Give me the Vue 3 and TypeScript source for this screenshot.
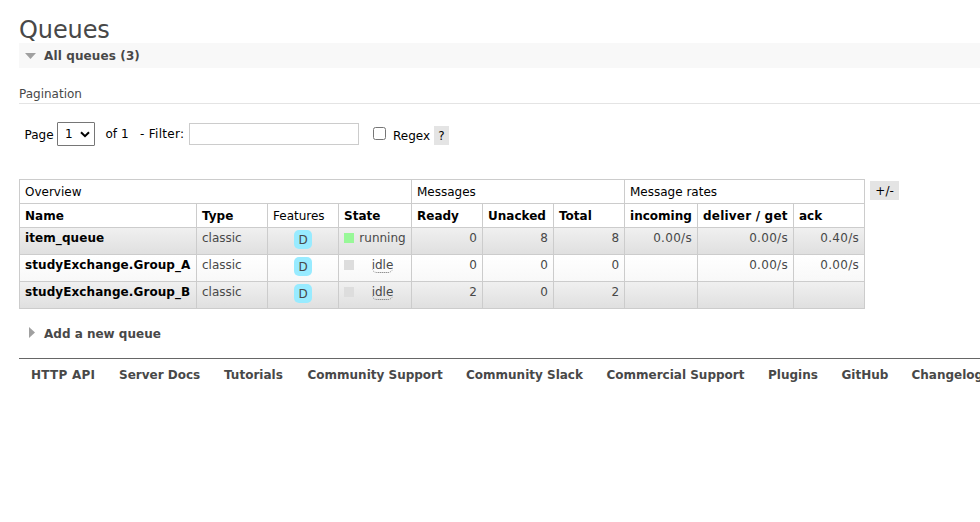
<script setup lang="ts">
interface Queue {
  name: string
  state: 'running' | 'idle'
  counts: number[]
  rates: string[]
}

const widths: number[] = [177, 71, 71, 73, 71, 71, 71, 73, 96, 71]

const queues: Queue[] = [
  { name: 'item_queue', state: 'running', counts: [0, 8, 8], rates: ['0.00/s', '0.00/s', '0.40/s'] },
  { name: 'studyExchange.Group_A', state: 'idle', counts: [0, 0, 0], rates: ['', '0.00/s', '0.00/s'] },
  { name: 'studyExchange.Group_B', state: 'idle', counts: [2, 0, 2], rates: ['', '', ''] },
]

const links: string[] = [
  'HTTP API',
  'Server Docs',
  'Tutorials',
  'Community Support',
  'Community Slack',
  'Commercial Support',
  'Plugins',
  'GitHub',
  'Changelog',
]
</script>

<template>
  <main class="page">
    <h1>Queues</h1>
    <h2 class="section open">
      <svg class="arrow" width="12" height="12" viewBox="0 0 12 12"><path d="M0 3H11L5.5 9Z" /></svg>
      <span>All queues (3)</span>
    </h2>
    <h3>Pagination</h3>

    <form class="filter" @submit.prevent>
      <label class="page-label" for="page">Page</label>
      <span class="select">
        <select id="page"><option>1</option></select>
        <svg class="chevron" width="10" height="7" viewBox="0 0 10 7"><path d="M1 1.2L5 5.2L9 1.2" /></svg>
      </span>
      <span class="of">of 1</span>
      <label class="filter-label" for="filter">- Filter:</label>
      <input id="filter" class="text" type="text" />
      <input id="regex" class="check" type="checkbox" />
      <label class="regex" for="regex">Regex</label>
      <span class="help">?</span>
    </form>

    <div class="listing">
      <table>
        <colgroup>
          <col v-for="(w, i) in widths" :key="i" :style="{ width: w + 'px' }" />
        </colgroup>
        <thead>
          <tr>
            <th class="plain" colspan="4">Overview</th>
            <th class="plain" colspan="3">Messages</th>
            <th class="plain" colspan="3">Message rates</th>
          </tr>
          <tr>
            <th>Name</th>
            <th>Type</th>
            <th class="plain">Features</th>
            <th>State</th>
            <th>Ready</th>
            <th>Unacked</th>
            <th>Total</th>
            <th>incoming</th>
            <th class="deliver">deliver / get</th>
            <th>ack</th>
          </tr>
        </thead>
        <tbody>
          <tr v-for="q in queues" :key="q.name">
            <td class="name">{{ q.name }}</td>
            <td>classic</td>
            <td class="features"><span class="badge">D</span></td>
            <td>
              <div class="state" :class="q.state">
                <i class="dot"></i>
                <span class="word"><span class="term">{{ q.state }}</span></span>
              </div>
            </td>
            <td v-for="(c, i) in q.counts" :key="'c' + i" class="num">{{ c }}</td>
            <td v-for="(r, i) in q.rates" :key="'r' + i" class="num rate">{{ r }}</td>
          </tr>
        </tbody>
      </table>
      <span class="columns">+/-</span>
    </div>

    <h2 class="section add">
      <svg class="arrow" width="12" height="12" viewBox="0 0 12 12"><path d="M4 0L10 5.5L4 11Z" /></svg>
      <span>Add a new queue</span>
    </h2>

    <footer>
      <a v-for="l in links" :key="l">{{ l }}</a>
    </footer>
  </main>
</template>

<style>
body {
  background: #fff;
  overflow: hidden;
}
</style>

<style scoped>
.page {
  box-sizing: border-box;
  height: 522px;
  padding: 17px 0 0 19px;
  overflow: hidden;
  font: 12px/15px Verdana, "DejaVu Sans", sans-serif;
  color: #484848;
}
h1 {
  margin: 0;
  height: 26px;
  font-size: 24px;
  line-height: 27px;
  font-weight: normal;
  letter-spacing: -0.1px;
}
.section {
  display: flex;
  align-items: center;
  margin: 0;
  padding-left: 6px;
  font-size: 12px;
}
.section span {
  padding-top: 2px;
}
.open {
  height: 25px;
  background: #f8f8f8;
  letter-spacing: 0.12px;
}
.arrow {
  flex: none;
  margin-right: 7px;
  fill: #a0a0a0;
}
h3 {
  margin: 19px 0 0;
  height: 16px;
  border-bottom: 1px solid #e4e4e4;
  font-size: 12px;
  font-weight: normal;
}
.filter {
  display: flex;
  align-items: center;
  height: 24px;
  margin: 18px 0 0;
  padding-left: 5.5px;
  color: #000;
}
.page-label {
  width: 32.5px;
  padding-top: 3px;
}
.select {
  position: relative;
  width: 38px;
  height: 24px;
}
select {
  appearance: none;
  box-sizing: border-box;
  width: 38px;
  height: 24px;
  margin: 0;
  padding: 1px 0 0 7px;
  border: 1px solid #767676;
  border-radius: 1px;
  background: #fff;
  font: inherit;
  color: #000;
}
.chevron {
  position: absolute;
  right: 5px;
  top: 9px;
  fill: none;
  stroke: #000;
  stroke-width: 2;
}
.of {
  width: 34.5px;
  margin-left: 10.5px;
  padding-top: 1px;
}
.filter-label {
  width: 49px;
  padding-top: 1px;
  letter-spacing: 0.3px;
}
.text {
  box-sizing: border-box;
  width: 170px;
  height: 22px;
  margin: 0;
  border: 1px solid #ccc;
}
.check {
  width: 13px;
  height: 13px;
  margin: 0 7px 2px 14px;
}
.regex {
  width: 41px;
  padding-top: 5px;
}
.help,
.columns {
  box-sizing: border-box;
  height: 19px;
  background: #e4e4e4;
  line-height: 20px;
  text-align: center;
}
.help {
  width: 15px;
  margin-top: 3px;
}
.listing {
  display: flex;
  align-items: flex-start;
  margin-top: 33px;
}
table {
  flex: none;
  width: 846px;
  table-layout: fixed;
  border-collapse: collapse;
}
th,
td {
  box-sizing: border-box;
  border: 1px solid #ccc;
  padding: 0 5px;
  text-align: left;
  vertical-align: top;
  white-space: nowrap;
}
th {
  height: 24px;
  padding-top: 5px;
  color: #000;
}
.plain {
  font-weight: normal;
}
.deliver {
  letter-spacing: 0.2px;
}
td {
  height: 27px;
  padding-top: 3px;
}
tbody tr {
  background: linear-gradient(#fff, #f8f8f8);
}
tbody tr:nth-child(odd) {
  background: linear-gradient(#f0f0f0, #dfdfdf);
}
.name {
  font-weight: bold;
  color: #000;
  letter-spacing: 0.08px;
}
.num {
  text-align: right;
}
.rate {
  letter-spacing: 0.3px;
}
.features {
  text-align: center;
}
.badge {
  display: block;
  width: 18px;
  height: 19px;
  margin: -1px auto 0;
  border-radius: 5px;
  background: #98ebff;
  line-height: 20px;
}
.state {
  display: flex;
}
.dot {
  width: 10px;
  height: 10px;
  margin-top: 2px;
  background: #ddd;
}
.running .dot {
  background: #98f898;
}
.word {
  flex: 1;
  padding-left: 5px;
  text-align: center;
}
.idle .term {
  display: inline-block;
  height: 14px;
  border-bottom: 1px dotted #666;
  border-radius: 5px;
}
.columns {
  width: 29px;
  margin: 2px 0 0 5px;
  color: #000;
}
.add {
  height: 20px;
  margin-top: 14px;
}
footer {
  display: grid;
  grid-template-columns: 88px 105px 83.5px 158.5px 140.5px 161.5px 73.5px 70px 80px;
  margin-top: 15px;
  padding: 9px 0 0 12px;
  border-top: 1px solid #666;
  font-weight: bold;
  white-space: nowrap;
}
footer a:first-child {
  letter-spacing: 0.25px;
}
</style>
